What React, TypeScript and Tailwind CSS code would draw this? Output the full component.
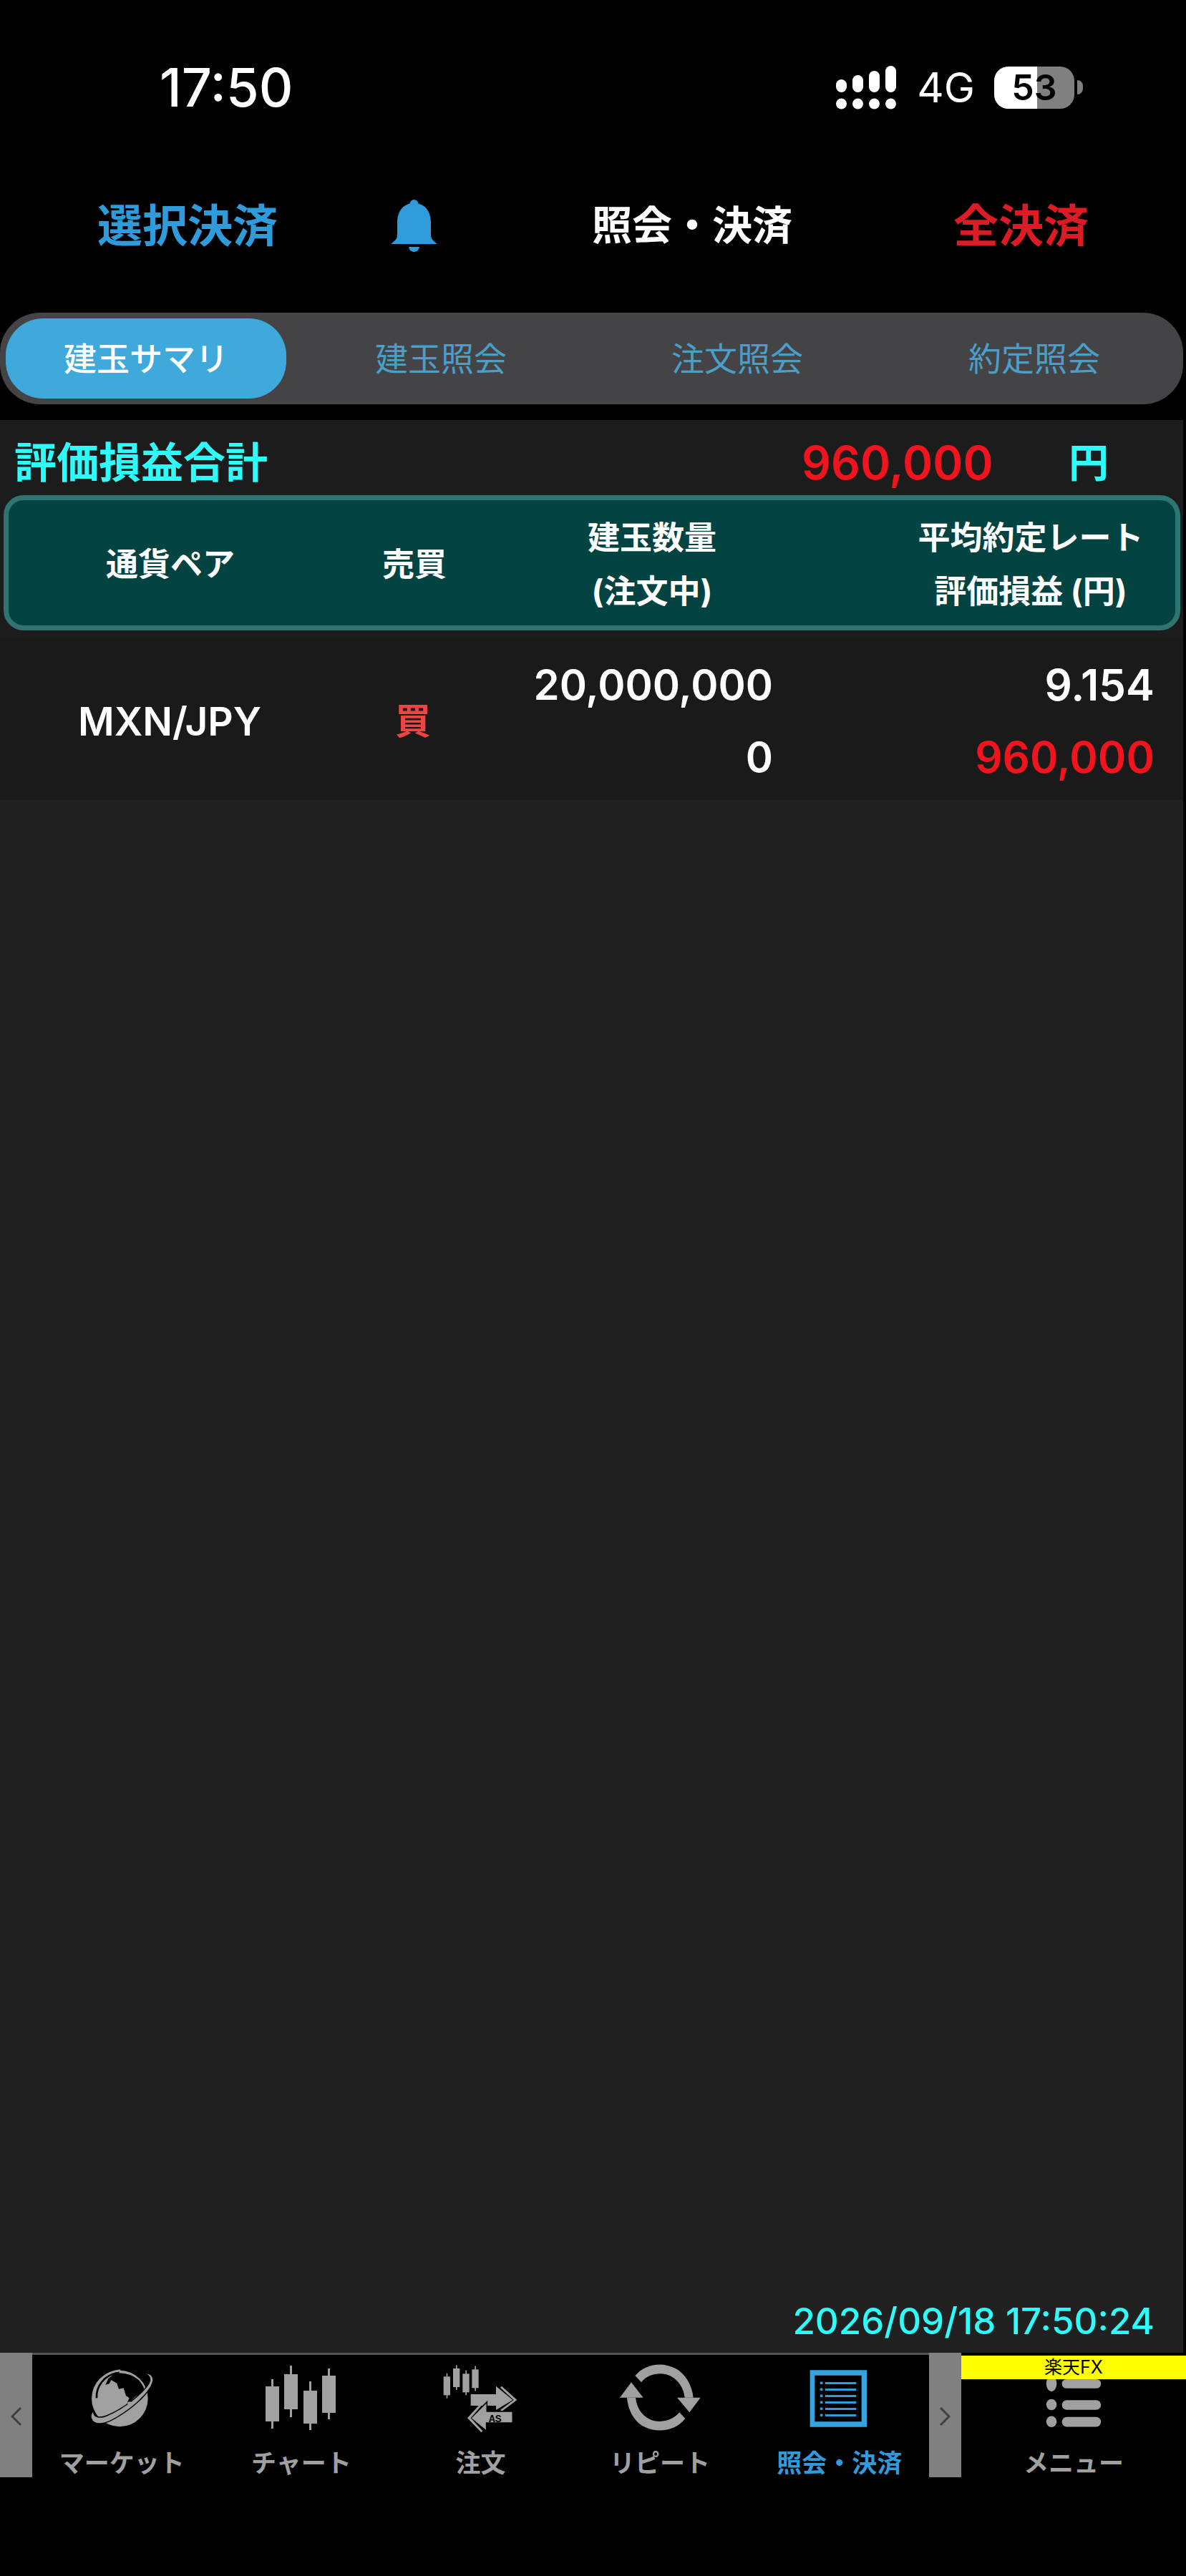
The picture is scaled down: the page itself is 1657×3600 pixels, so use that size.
const font = "font-['Inter','Noto_Sans_CJK_JP',sans-serif]";

function SignalIcon() {
    return (
        <svg width="85" height="61" viewBox="0 0 85 61" fill="white">
            <rect x="0" y="19" width="15" height="18" rx="7.5" />
            <rect x="23" y="13" width="15" height="24" rx="7.5" />
            <rect x="46" y="7" width="15" height="30" rx="7.5" />
            <rect x="69" y="0" width="15" height="37" rx="7.5" />
            <circle cx="7.5" cy="53" r="7.5" />
            <circle cx="30.5" cy="53" r="7.5" />
            <circle cx="53.5" cy="53" r="7.5" />
            <circle cx="76.5" cy="53" r="7.5" />
        </svg>
    );
}

function BellIcon() {
    return (
        <svg width="67" height="73" viewBox="0 0 67 73" fill="#2f9bdb">
            <circle cx="33.5" cy="6" r="6" />
            <path d="M33.5 5C17 5 10 18 10 32V50C10 55 6 58 0 63C-1 65 0 62 2 62H65C67 62 68 65 67 63C61 58 57 55 57 50V32C57 18 50 5 33.5 5Z" />
            <path d="M26 66H41C40 71 37 73 33.5 73C30 73 27 71 26 66Z" />
        </svg>
    );
}

function GlobeIcon() {
    return (
        <svg width="120" height="105" viewBox="0 0 360 315">
            <circle cx="172" cy="162" r="118" fill="#a0a0a0" />
            <path d="M150 58C185 50 225 60 252 85C268 102 277 122 280 142L258 152L240 152L222 168L224 184L204 178L212 160L198 150L188 118L168 122L160 98L136 84L128 100L112 104L124 78Z" fill="#000" />
            <path d="M75 160C72 115 105 60 170 52" stroke="#000" strokeWidth="8" fill="none" />
            <path d="M62 140C70 95 110 50 175 44" stroke="#a0a0a0" strokeWidth="8" fill="none" />
            <path d="M285 58C308 62 318 80 302 108C280 150 210 215 130 254C95 270 65 268 56 248C50 236 54 226 60 218C62 240 82 250 118 236C190 208 272 140 296 100C306 80 300 68 285 58Z" fill="#a0a0a0" stroke="#000" strokeWidth="9" paintOrder="stroke" />
            <circle cx="214" cy="184" r="9" fill="#a0a0a0" />
        </svg>
    );
}

function CandlesIcon() {
    return (
        <svg width="99" height="90" viewBox="0 0 99 90" fill="#a0a0a0">
            <rect x="0" y="29" width="19" height="49" />
            <rect x="8" y="19" width="3" height="69" />
            <rect x="26" y="12" width="19" height="49" />
            <rect x="34" y="0" width="3" height="72" />
            <rect x="53" y="35" width="19" height="46" />
            <rect x="61" y="22" width="3" height="68" />
            <rect x="79" y="14" width="19" height="52" />
            <rect x="87" y="4" width="3" height="71" />
        </svg>
    );
}

function OrderIcon() {
    return (
        <svg width="125" height="110" viewBox="0 0 375 330" fill="#a0a0a0">
            <rect x="32" y="76" width="28" height="78" />
            <rect x="44" y="62" width="5" height="105" />
            <rect x="72" y="42" width="28" height="78" />
            <rect x="84" y="28" width="5" height="104" />
            <rect x="112" y="64" width="28" height="78" />
            <rect x="124" y="50" width="5" height="104" />
            <rect x="151" y="46" width="28" height="78" />
            <rect x="163" y="32" width="5" height="104" />
            <path d="M146 150H252V116L322 174L252 216V198H146Z" />
            <path d="M276 116L340 174L276 222L270 216L326 174L270 122Z" />
            <path d="M322 222V270H212V304L146 250L214 182V222Z" stroke="#000" strokeWidth="5" />
            <path d="M190 186L132 250L190 310L196 304L146 250L196 192Z" />
            <text x="222" y="266" fontFamily="'Liberation Mono', monospace" fontWeight="700" fontSize="44" fill="#000">AS</text>
        </svg>
    );
}

function RepeatIcon() {
    return (
        <svg width="125" height="110" viewBox="0 0 375 330" fill="#a0a0a0">
            <path d="M82 72C125 22 195 12 252 42C292 64 320 110 326 164H290C286 125 265 92 232 74C190 54 135 64 108 100Z" />
            <path d="M258 164H356L310 226Z" />
            <path d="M292 252C250 305 175 315 118 285C78 264 52 215 48 164H84C88 205 110 238 142 254C185 274 238 262 268 226Z" />
            <path d="M18 164L66 100L116 164Z" />
        </svg>
    );
}

function PositionIcon() {
    const rows = [0, 1, 2, 3, 4, 5];
    return (
        <svg width="100" height="100" viewBox="0 0 300 300" fill="#2f9bdb">
            <path fillRule="evenodd" d="M26 34H264V272H26ZM46 56V250H242V56Z" fill="#36a3dc" />
            {rows.map((r) => (
                <g key={r}>
                    <circle cx="74" cy={88 + r * 27} r="6" />
                    <rect x="90" y={84 + r * 27} width="130" height="9" />
                </g>
            ))}
        </svg>
    );
}

function MenuIcon() {
    return (
        <svg width="84" height="78" viewBox="0 0 84 78" fill="#a0a0a0">
            <ellipse cx="8" cy="7" rx="8" ry="12" />
            <rect x="24" y="0" width="60" height="14" rx="7" />
            <ellipse cx="8" cy="39" rx="8" ry="8.5" />
            <rect x="24" y="32" width="60" height="15" rx="7.5" />
            <ellipse cx="8" cy="65" rx="8" ry="8.5" />
            <rect x="24" y="58" width="60" height="15" rx="7.5" />
        </svg>
    );
}

function NavItem({ label, active, children }: { label: string; active?: boolean; children: React.ReactNode }) {
    return (
        <div className="flex w-[250.6px] flex-col items-center">
            <div className="flex h-[125px] items-center justify-center">{children}</div>
            <span className={`mt-[12px] text-[35px] leading-[40px] font-bold ${active ? 'text-[#2f9bdb]' : 'text-[#a0a0a0]'}`}>
                {label}
            </span>
        </div>
    );
}

export default function App() {
    return (
        <div className={`flex h-[3600px] w-[1657px] flex-col bg-black ${font}`}>
            {/* Status bar */}
            <div className="flex h-[244px] items-center justify-between pr-[144px] pl-[223px]">
                <span className="text-[74px] leading-none font-medium text-white">17:50</span>
                <div className="flex items-center">
                    <SignalIcon />
                    <span className="ml-[28px] text-[58px] leading-none text-white">4G</span>
                    <div className="ml-[27px] flex items-center">
                        <div className="relative flex h-[59px] w-[112px] items-center justify-center overflow-hidden rounded-[20px] bg-[#808080]">
                            <div className="absolute top-0 bottom-0 left-0 w-[60px] bg-white" />
                            <span className="relative text-[50px] leading-none font-semibold text-black">53</span>
                        </div>
                        <div className="ml-[4px] h-[20px] w-[8px] rounded-r-full bg-[#808080]" />
                    </div>
                </div>
            </div>

            {/* Header */}
            <div className="flex h-[142px] items-center pl-[136px]">
                <span className="w-[409px] text-[63px] leading-none font-bold text-[#2f9bdb]">選択決済</span>
                <div className="w-[282px]">
                    <BellIcon />
                </div>
                <span className="w-[505px] text-[56px] leading-none font-bold whitespace-nowrap text-white">照会・決済</span>
                <span className="text-[63px] leading-none font-bold text-[#dc1c24]">全決済</span>
            </div>

            {/* Tabs */}
            <div className="mt-[51px] flex h-[128px] w-[1653px] items-center rounded-[56px] bg-[#444446] pl-[8px]">
                <div className="flex h-[112px] w-[395px] items-center justify-center rounded-[52px] bg-[#3fa9dc] text-[46px] font-medium text-white">
                    建玉サマリ
                </div>
                <div className="grid flex-1 grid-cols-[414px_414px_416px] pl-[9px] text-center text-[46px] text-[#4a9fc9]">
                    <span>建玉照会</span>
                    <span>注文照会</span>
                    <span>約定照会</span>
                </div>
            </div>

            {/* Panel */}
            <div className="mt-[22px] flex w-[1653px] flex-1 flex-col bg-[#212121]">
                <div className="bg-[#1c1c1c]">
                    <div className="flex h-[105px] items-center pt-[14px] pl-[20px]">
                        <span className="w-[1100px] text-[59px] leading-none font-bold text-[#2ffbfb]">評価損益合計</span>
                        <span className="w-[373px] text-[64px] leading-none font-semibold text-[#f0141e]">960,000</span>
                        <span className="text-[56px] leading-none font-bold text-[#2ffbfb]">円</span>
                    </div>
                    <div className="ml-[5px] grid h-[189px] w-[1644px] grid-cols-[452px_230px_434px_514px] items-center rounded-[28px] border-[7px] border-[#2f7373] bg-[#034342] pt-[4px] text-[45px] leading-[75px] font-bold text-white">
                        <span className="text-center">通貨ペア</span>
                        <span className="text-center">売買</span>
                        <div className="text-center">
                            <div>建玉数量</div>
                            <div>(注文中)</div>
                        </div>
                        <div className="pl-[110px] text-center whitespace-nowrap">
                            <div>平均約定レート</div>
                            <div>評価損益 (円)</div>
                        </div>
                    </div>
                    <div className="h-[12px]" />
                </div>

                <div className="grid h-[225px] grid-cols-[474px_206px_400px_533px] items-center bg-[#1a1a1a] pt-[5px] text-[58px] leading-[101px] font-semibold text-white">
                    <span className="text-center text-[55px]">MXN/JPY</span>
                    <span className="text-center text-[50px] font-bold text-[#ef4444]">買</span>
                    <div className="text-right">
                        <div>20,000,000</div>
                        <div>0</div>
                    </div>
                    <div className="text-right text-[60px]">
                        <div>9.154</div>
                        <div className="text-[#f0141e]">960,000</div>
                    </div>
                </div>

                <div className="flex flex-1 items-end justify-end pr-[40px] pb-[19px]">
                    <span className="text-[51px] leading-[50px] font-medium text-[#2ffbfb]">2026/09/18 17:50:24</span>
                </div>
            </div>

            {/* Bottom nav */}
            <div className="flex h-[174px]">
                <div className="flex w-[45px] items-center justify-center bg-[#808080] pt-[4px]">
                    <svg width="16" height="26" viewBox="0 0 16 26" fill="none" stroke="#404040" strokeWidth="3">
                        <path d="M14 1L2 13L14 25" />
                    </svg>
                </div>
                <div className="flex border-t-[3px] border-[#555555]">
                    <NavItem label="マーケット"><GlobeIcon /></NavItem>
                    <NavItem label="チャート"><CandlesIcon /></NavItem>
                    <NavItem label="注文"><OrderIcon /></NavItem>
                    <NavItem label="リピート"><RepeatIcon /></NavItem>
                    <NavItem label="照会・決済" active><PositionIcon /></NavItem>
                </div>
                <div className="flex w-[45px] items-center justify-center bg-[#808080] pt-[4px]">
                    <svg width="16" height="26" viewBox="0 0 16 26" fill="none" stroke="#404040" strokeWidth="3">
                        <path d="M2 1L14 13L2 25" />
                    </svg>
                </div>
                <div className="relative flex flex-1 flex-col items-center pt-[37px]">
                    <MenuIcon />
                    <span className="mt-[26px] text-[35px] leading-[40px] font-bold text-[#a0a0a0]">メニュー</span>
                    <div className="absolute top-[4px] right-0 left-0 flex h-[33px] items-center justify-center bg-[#ffff00] text-[25px] leading-none text-black">
                        楽天FX
                    </div>
                </div>
            </div>

            <div className="h-[138px]" />
        </div>
    );
}
